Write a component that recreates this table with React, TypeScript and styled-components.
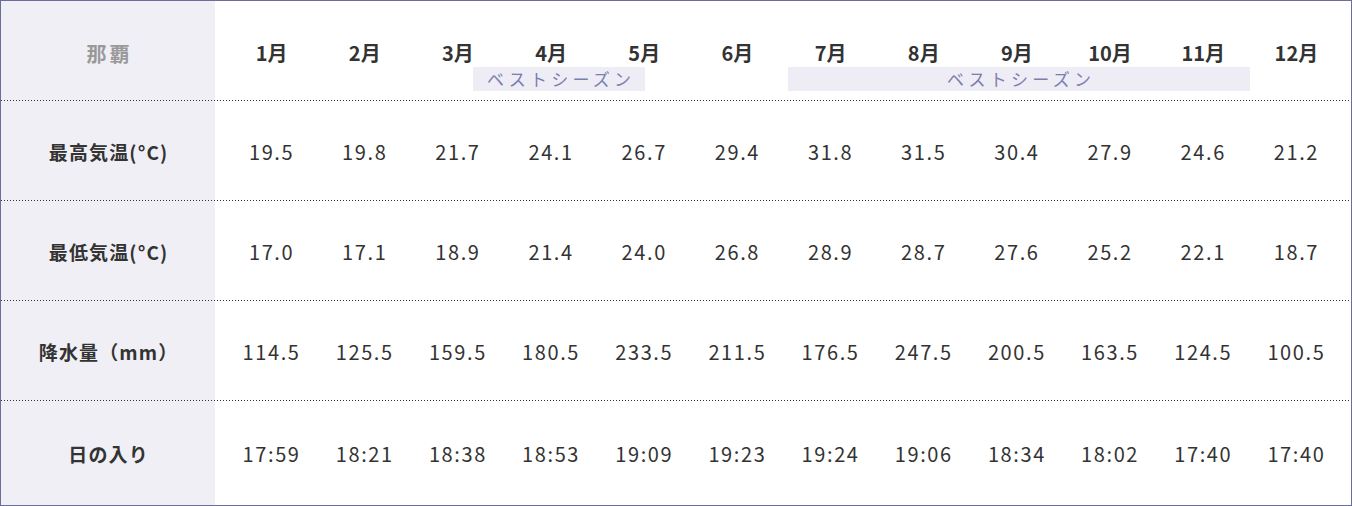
import React from 'react';
import styled, { createGlobalStyle } from 'styled-components';

const months = ['1月', '2月', '3月', '4月', '5月', '6月', '7月', '8月', '9月', '10月', '11月', '12月'];

const rows = [
  {
    label: '最高気温(°C)',
    values: ['19.5', '19.8', '21.7', '24.1', '26.7', '29.4', '31.8', '31.5', '30.4', '27.9', '24.6', '21.2'],
  },
  {
    label: '最低気温(°C)',
    values: ['17.0', '17.1', '18.9', '21.4', '24.0', '26.8', '28.9', '28.7', '27.6', '25.2', '22.1', '18.7'],
  },
  {
    label: '降水量（mm）',
    values: ['114.5', '125.5', '159.5', '180.5', '233.5', '211.5', '176.5', '247.5', '200.5', '163.5', '124.5', '100.5'],
  },
  {
    label: '日の入り',
    values: ['17:59', '18:21', '18:38', '18:53', '19:09', '19:23', '19:24', '19:06', '18:34', '18:02', '17:40', '17:40'],
  },
];

const seasons = [
  { from: 3, to: 6, left: 62, right: 46 },
  { from: 7, to: 12, left: 4, right: 0 },
];

const App = () => {
  return (
    <>
      <GlobalStyle />
      <Table>
        <Row>
          <Label muted>那覇</Label>
          <MonthGrid>
            {months.map((m) => (
              <Month key={m}>{m}</Month>
            ))}
            {seasons.map((s) => (
              <Season key={s.from} from={s.from} to={s.to} left={s.left} right={s.right}>
                ベストシーズン
              </Season>
            ))}
          </MonthGrid>
        </Row>
        {rows.map((r, i) => (
          <Row key={r.label} last={i === rows.length - 1}>
            <Label>{r.label}</Label>
            <ValueGrid>
              {r.values.map((v, j) => (
                <Value key={j}>{v}</Value>
              ))}
            </ValueGrid>
          </Row>
        ))}
      </Table>
    </>
  );
};

const GlobalStyle = createGlobalStyle`
  html, body {
    margin: 0;
    padding: 0;
    background: #fff;
  }
  body {
    font-family: "Noto Sans CJK JP", "Noto Sans", sans-serif;
    color: #333;
  }
`;

const Table = styled.div`
  box-sizing: border-box;
  width: 1352px;
  height: 506px;
  border: 1px solid #6a6e99;
  display: flex;
  flex-direction: column;
  overflow: hidden;
`;

const Row = styled.div<{ last?: boolean }>`
  display: grid;
  grid-template-columns: 214px 1fr;
  height: ${(p) => (p.last ? '104px' : '100px')};
  flex-shrink: 0;
  position: relative;
  &::after {
    content: '';
    display: ${(p) => (p.last ? 'none' : 'block')};
    position: absolute;
    left: 0;
    right: 0;
    bottom: 0;
    height: 1px;
    background-image: linear-gradient(to right, #333 1px, transparent 1px);
    background-size: 3px 1px;
  }
`;

const Label = styled.div<{ muted?: boolean }>`
  background: #f0eff6;
  display: flex;
  align-items: center;
  justify-content: center;
  font-size: ${(p) => (p.muted ? '20px' : '19px')};
  font-weight: 700;
  letter-spacing: ${(p) => (p.muted ? '0.15em' : '0.06em')};
  color: ${(p) => (p.muted ? '#999' : '#333')};
  padding-top: ${(p) => (p.muted ? '5px' : '1px')};
  padding-left: ${(p) => (p.muted ? '0.15em' : '0.06em')};
`;

const MonthGrid = styled.div`
  display: grid;
  grid-template-columns: repeat(12, 1fr);
  grid-template-rows: 24px 24px;
  row-gap: 2px;
  padding: 40px 8px 0 10px;
`;

const Month = styled.div`
  grid-row: 1;
  text-align: center;
  font-size: 20px;
  font-weight: 700;
  line-height: 24px;
  color: #333;
`;

const Season = styled.div<{ from: number; to: number; left: number; right: number }>`
  grid-row: 2;
  grid-column: ${(p) => `${p.from} / ${p.to}`};
  margin-left: ${(p) => p.left}px;
  margin-right: ${(p) => p.right}px;
  background: #eeedf6;
  color: #7b7eae;
  font-size: 17px;
  line-height: 24px;
  letter-spacing: 0.25em;
  text-align: center;
  padding-left: 0.25em;
`;

const ValueGrid = styled.div`
  display: grid;
  grid-template-columns: repeat(12, 1fr);
  align-items: center;
  padding: 1px 8px 0 10px;
`;

const Value = styled.div`
  text-align: center;
  font-size: 20px;
  letter-spacing: 0.08em;
  color: #333;
`;

export default App;
